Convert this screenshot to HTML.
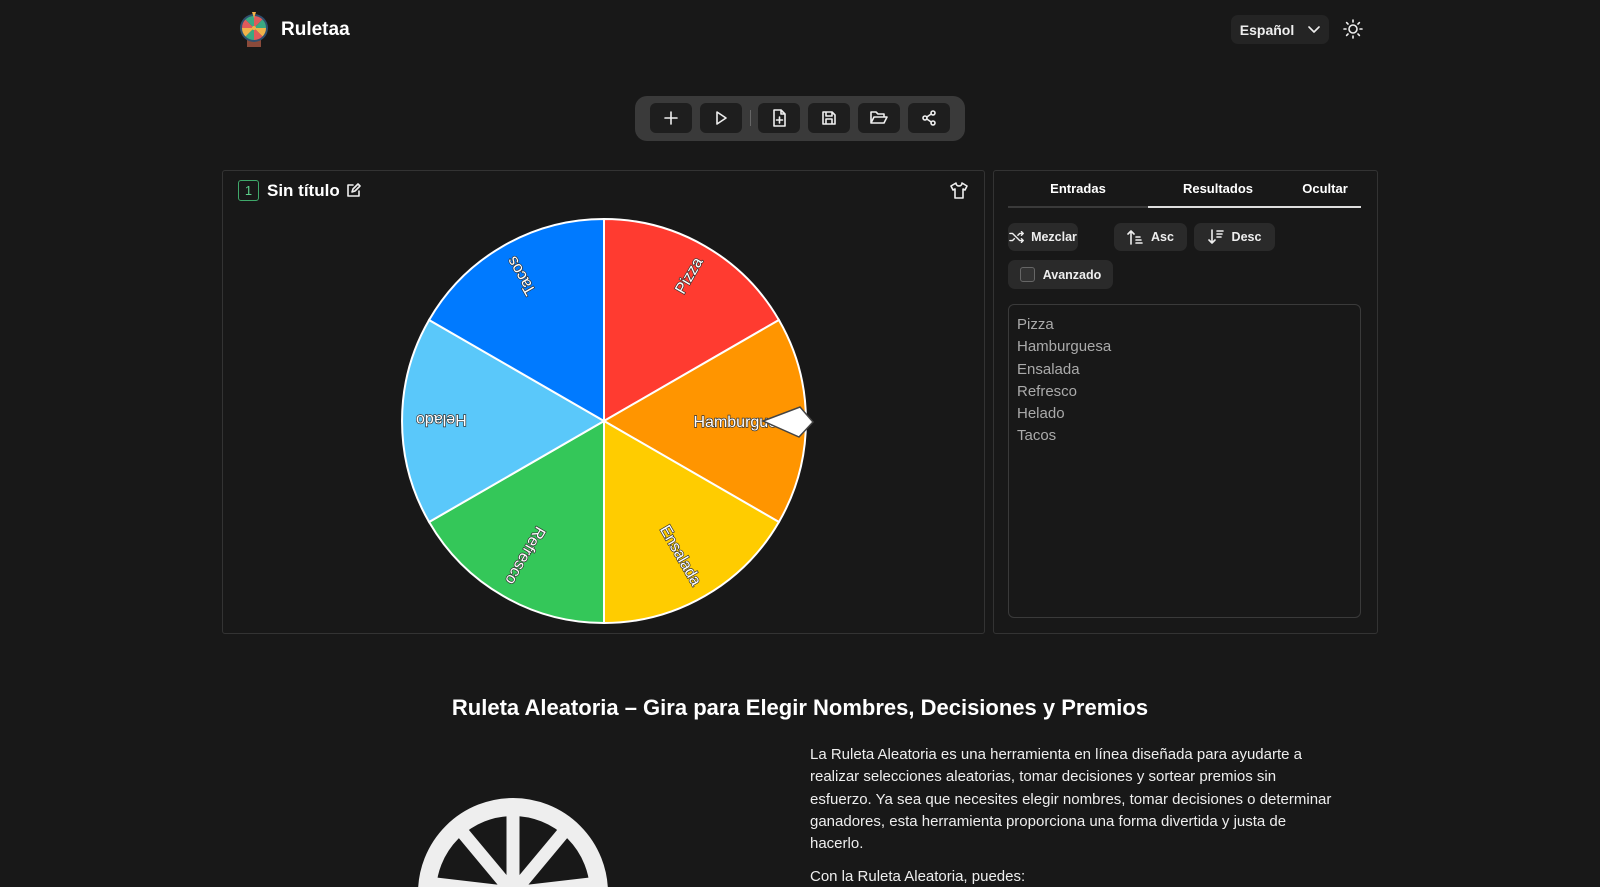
<!DOCTYPE html>
<html><head><meta charset="utf-8"><style>
*{box-sizing:border-box;margin:0;padding:0}
body{width:1600px;height:887px;overflow:hidden;background:#181818;color:#fff;font-family:"Liberation Sans",sans-serif;position:relative}
.abs{position:absolute}
.btn{position:absolute;background:#2a2a2a;border-radius:7px;display:flex;align-items:center;justify-content:center;font-size:12.5px;font-weight:bold;color:#eee;gap:6px;white-space:nowrap}
.tb{position:absolute;top:103px;width:42px;height:30px;background:#1e1e1e;border-radius:6px;display:flex;align-items:center;justify-content:center}
svg.i{fill:none;stroke:#eee;stroke-width:1.6;stroke-linecap:round;stroke-linejoin:round}
</style></head><body>
<svg class="abs" style="left:238px;top:10px" width="34" height="40" viewBox="0 0 34 40">
<rect x="9" y="29" width="14" height="8" fill="#8a4a3a"/>
<g transform="translate(16,18)">
<circle r="14" fill="#2e4f6e"/>
<path d="M0 0L0-12A12 12 0 0 1 8.5-8.5Z" fill="#e05a5a"/><path d="M0 0L8.5-8.5A12 12 0 0 1 12 0Z" fill="#3aa882"/>
<path d="M0 0L12 0A12 12 0 0 1 8.5 8.5Z" fill="#f0b24a"/><path d="M0 0L8.5 8.5A12 12 0 0 1 0 12Z" fill="#e05a5a"/>
<path d="M0 0L0 12A12 12 0 0 1 -8.5 8.5Z" fill="#3aa882"/><path d="M0 0L-8.5 8.5A12 12 0 0 1 -12 0Z" fill="#f0b24a"/>
<path d="M0 0L-12 0A12 12 0 0 1 -8.5 -8.5Z" fill="#e05a5a"/><path d="M0 0L-8.5-8.5A12 12 0 0 1 0-12Z" fill="#3aa882"/>
<circle r="2" fill="#f0b24a"/></g>
<path d="M14 2h4l-2 6z" fill="#f0b24a"/></svg>
<div class="abs" style="left:281px;top:19px;font-size:19px;font-weight:bold">Ruletaa</div>
<div class="btn" style="left:1231px;top:15px;width:98px;height:29px;background:#242424;font-size:14px;gap:14px">Español <svg class="i" width="12" height="8" viewBox="0 0 12 8"><path d="M1 1l5 5 5-5"/></svg></div>
<svg class="i abs" style="left:1343px;top:19px" width="20" height="20" viewBox="0 0 20 20"><circle cx="10" cy="10" r="4"/><path d="M10 1v2M10 17v2M1 10h2M17 10h2M3.6 3.6l1.4 1.4M15 15l1.4 1.4M3.6 16.4L5 15M15 5l1.4-1.4"/></svg>
<div class="abs" style="left:635px;top:96px;width:330px;height:45px;background:#3a3a3a;border-radius:12px"></div>
<div class="tb" style="left:650px"><svg class="i" width="16" height="16" viewBox="0 0 16 16"><path d="M8 2v12M2 8h12"/></svg></div>
<div class="tb" style="left:700px"><svg class="i" width="16" height="16" viewBox="0 0 16 16"><path d="M4 2l9 6-9 6z"/></svg></div>
<div class="abs" style="left:750px;top:110px;width:1px;height:16px;background:#666"></div>
<div class="tb" style="left:758px"><svg class="i" width="16" height="18" viewBox="0 0 16 18"><path d="M3 1h7l4 4v12H3zM10 1v4h4M8.5 8v6M5.5 11h6"/></svg></div>
<div class="tb" style="left:808px"><svg class="i" width="16" height="16" viewBox="0 0 16 16"><path d="M2 2h9l3 3v9H2zM5 2v4h6V2M5 14v-5h6v5"/></svg></div>
<div class="tb" style="left:858px"><svg class="i" width="18" height="16" viewBox="0 0 18 16"><path d="M1 13V2h5l2 2h6v3M1 13l3-6h13l-3 6z"/></svg></div>
<div class="tb" style="left:908px"><svg class="i" width="16" height="16" viewBox="0 0 16 16"><circle cx="12" cy="3" r="2"/><circle cx="4" cy="8" r="2"/><circle cx="12" cy="13" r="2"/><path d="M5.8 7l4.4-3M5.8 9l4.4 3"/></svg></div>
<div class="abs" style="left:222px;top:170px;width:763px;height:464px;border:1px solid #333;border-radius:3px"></div>
<div class="abs" style="left:238px;top:180px;width:21px;height:21px;border:1px solid #3fa86a;border-radius:3px;color:#5ccf8a;font-size:13px;text-align:center;line-height:19px">1</div>
<div class="abs" style="left:267px;top:181px;font-size:17px;font-weight:bold">Sin título</div>
<svg class="i abs" style="left:346px;top:183px" width="15" height="15" viewBox="0 0 15 15"><path d="M7 2H2v11h11V8M6 9l1-3 5-5 2 2-5 5z"/></svg>
<svg class="i abs" style="left:950px;top:181px" width="18" height="18" viewBox="0 0 18 18"><path d="M6 2L1 5l2 4 2-1v9h8V8l2 1 2-4-5-3c0 2-1.5 3-3 3S6 4 6 2z"/></svg>
<svg class="abs" style="left:0;top:0" width="1000" height="700">
<g transform="translate(604,421)" stroke="#fff" stroke-width="2">
<path d="M0 0L0-202A202 202 0 0 1 174.9-101Z" fill="#ff3b30"/>
<path d="M0 0L174.9-101A202 202 0 0 1 174.9 101Z" fill="#ff9500"/>
<path d="M0 0L174.9 101A202 202 0 0 1 0 202Z" fill="#ffcc00"/>
<path d="M0 0L0 202A202 202 0 0 1 -174.9 101Z" fill="#34c759"/>
<path d="M0 0L-174.9 101A202 202 0 0 1 -174.9 -101Z" fill="#5ac8fa"/>
<path d="M0 0L-174.9-101A202 202 0 0 1 0-202Z" fill="#007aff"/>
</g>
<g transform="translate(604,421)" font-family="Liberation Sans" font-size="16" fill="#fff" stroke="#333" stroke-width="1.4" paint-order="stroke" text-anchor="end">
<text transform="rotate(-60)" x="188" y="6">Pizza</text>
<text transform="rotate(0)" x="190" y="6">Hamburguesa</text>
<text transform="rotate(60)" x="188" y="6">Ensalada</text>
<text transform="rotate(120)" x="188" y="6">Refresco</text>
<text transform="rotate(180)" x="188" y="6">Helado</text>
<text transform="rotate(240)" x="188" y="6">Tacos</text>
</g>
<path d="M763 421L800 407L813 422L799 437Z" fill="#fff" stroke="#444" stroke-width="1.5"/>
</svg>
<div class="abs" style="left:993px;top:170px;width:385px;height:464px;border:1px solid #333;border-radius:3px"></div>
<div class="abs" style="left:1008px;top:181px;width:140px;text-align:center;font-size:13px;font-weight:bold">Entradas</div>
<div class="abs" style="left:1148px;top:181px;width:140px;text-align:center;font-size:13px;font-weight:bold">Resultados</div>
<div class="abs" style="left:1290px;top:181px;width:70px;text-align:center;font-size:13px;font-weight:bold">Ocultar</div>
<div class="abs" style="left:1008px;top:206px;width:353px;height:2px;background:#3a3a3a"></div>
<div class="abs" style="left:1148px;top:206px;width:213px;height:2px;background:#ddd"></div>
<div class="btn" style="left:1008px;top:223px;width:70px;height:28px"><svg class="i" width="16" height="12" viewBox="0 0 18 12"><path d="M1 2h3l8 8h4M1 10h3l2-2M10 4l2-2h4M14 0l2 2-2 2M14 8l2 2-2 2"/></svg>Mezclar</div>
<div class="btn" style="left:1114px;top:223px;width:73px;height:28px;gap:8px"><svg class="i" width="16" height="16" viewBox="0 0 16 16"><path d="M4 15V2M1 5l3-3 3 3M9 8h4M9 11h5M9 14h6"/></svg>Asc</div>
<div class="btn" style="left:1194px;top:223px;width:81px;height:28px;gap:8px"><svg class="i" width="16" height="16" viewBox="0 0 16 16"><path d="M4 1v13M1 11l3 3 3-3M9 2h6M9 5h5M9 8h4"/></svg>Desc</div>
<div class="btn" style="left:1008px;top:260px;width:105px;height:29px;gap:8px"><span style="width:15px;height:15px;border:1px solid #666;border-radius:3px;background:#333"></span>Avanzado</div>
<div class="abs" style="left:1008px;top:304px;width:353px;height:314px;border:1px solid #3a3a3a;border-radius:6px;padding:9px 8px;font-size:15px;line-height:22.3px;color:#aaa">Pizza<br>Hamburguesa<br>Ensalada<br>Refresco<br>Helado<br>Tacos</div>
<div class="abs" style="left:0;top:695px;width:1600px;text-align:center;font-size:22px;font-weight:bold">Ruleta Aleatoria – Gira para Elegir Nombres, Decisiones y Premios</div>
<div class="abs" style="left:810px;top:744px;width:600px;height:143px;overflow:hidden;white-space:nowrap;font-size:15px;line-height:22.3px;color:#eee">La Ruleta Aleatoria es una herramienta en línea diseñada para ayudarte a<br>realizar selecciones aleatorias, tomar decisiones y sortear premios sin<br>esfuerzo. Ya sea que necesites elegir nombres, tomar decisiones o determinar<br>ganadores, esta herramienta proporciona una forma divertida y justa de<br>hacerlo.<div style="margin-top:11px">Con la Ruleta Aleatoria, puedes:</div></div>
<svg class="abs" style="left:410px;top:790px" width="210" height="97" viewBox="0 0 210 97">
<g transform="translate(103,103)" stroke="#eee" fill="none">
<circle r="86" stroke-width="18"/>
<path d="M0 0V-86M0 0L-55-66M0 0L55-66M0 0L-86-10M0 0L86-10" stroke-width="13"/>
<circle r="14" fill="#eee" stroke="none"/>
</g></svg>
</body></html>
